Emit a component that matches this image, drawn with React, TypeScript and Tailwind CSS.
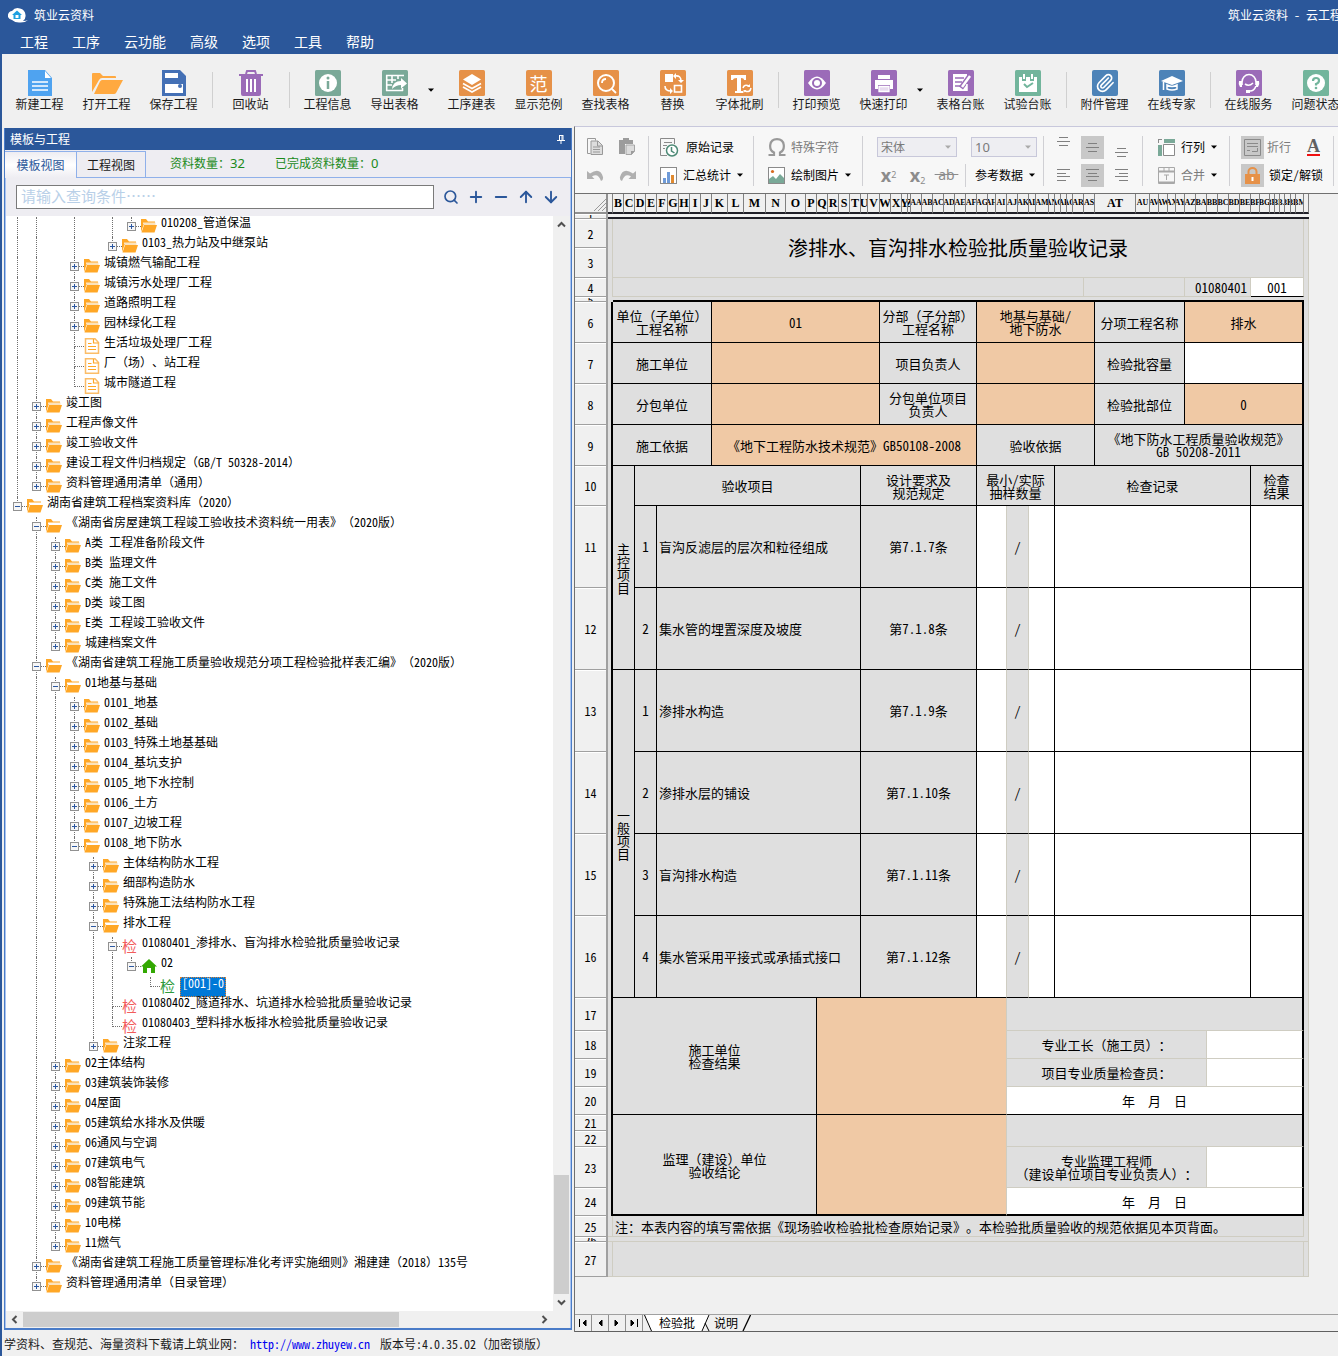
import type { ReactNode } from "react"
import { ArrowDown, ArrowUp, Minus, Paperclip, Plus, Search } from "lucide-react"

/* ---------- icons ---------- */

const Caret = ({ className = "fill-black" }: { className?: string }) => (
  <svg width="6" height="4" viewBox="0 0 6 4" className={`shrink-0 ${className}`}>
    <path d="M0 0.5h6L3 3.8z" />
  </svg>
)

const Tile = ({ color, children }: { color: string; children: ReactNode }) => (
  <svg width="26" height="26" viewBox="0 0 26 26" fill="none" stroke="#fff" strokeWidth="2">
    <rect width="26" height="26" rx="1.5" fill={color} stroke="none" />
    {children}
  </svg>
)

const GREEN = "#7aa998"
const ORANGE = "#e69148"
const PURPLE = "#9b6bb8"
const BLUE = "#4d83b8"
const MINT = "#72b59c"

const icons: Record<string, ReactNode> = {
  newFile: (
    <svg width="26" height="26" viewBox="0 0 26 26">
      <path d="M1 0h17l7 8v18H1z" fill="#4fa3f0" />
      <path d="M18 1v7h6z" fill="#fff" />
      <path d="M5 12h16M5 16h16M5 20h16" stroke="#fff" strokeWidth="1.6" />
    </svg>
  ),
  open: (
    <svg width="32" height="26" viewBox="0 0 32 26" fill="#ffa940">
      <path d="M1 22V4q0-1 1-1h7l3 3h12q1 0 1 1v1H11q-2 0-3 2z" />
      <path d="M11 10h21l-7 13q-.6 1-2 1H3l6-12.500q.700-1.500 2-1.500z" />
    </svg>
  ),
  save: (
    <svg width="26" height="26" viewBox="0 0 26 26">
      <path d="M1 0h18l6 6v20H1z" fill="#4470b5" />
      <path d="M4 3h13v5H4zM4 14h18v9H4z" fill="#fff" />
      <circle cx="19" cy="16" r="2" fill="#4470b5" />
    </svg>
  ),
  bin: (
    <svg width="26" height="26" viewBox="0 0 26 26">
      <path d="M8 4l1-3h8l1 3" fill="none" stroke={PURPLE} strokeWidth="2" />
      <path d="M1 4h24v2H23v18q0 2-2 2H5q-2 0-2-2V6H1z" fill={PURPLE} />
      <path d="M9 9v13M13 9v13M17 9v13" stroke="#fff" strokeWidth="2" />
    </svg>
  ),
  info: (
    <Tile color={GREEN}>
      <circle cx="13" cy="13" r="9" fill="#fff" stroke="none" />
      <path d="M13 11v8" stroke={GREEN} strokeWidth="2.500" />
      <circle cx="13" cy="8" r="1.500" fill={GREEN} stroke="none" />
    </Tile>
  ),
  exportTable: (
    <Tile color={GREEN}>
      <path d="M4 5.500h18M4.700 5v16M4 10h10M4 15h6M4 20.500h17M10 5v8M16 5v4M20.500 18v3" strokeWidth="1.600" />
      <path d="M10 19q1-8 9-8V8l6 5.500-6 5V15q-5 0-9 4z" fill="#fff" stroke="none" />
    </Tile>
  ),
  layers: (
    <Tile color={ORANGE}>
      <path d="M13 4l9 5.500-9 5.500-9-5.500z" fill="#fff" stroke="none" />
      <path d="M4 13.500l9 5 9-5M4 17l9 5 9-5" strokeWidth="1.700" />
    </Tile>
  ),
  find: (
    <Tile color={ORANGE}>
      <circle cx="13" cy="13" r="8" />
      <path d="M19 19l4 4M9 13q0-4 4-4" strokeWidth="1.800" />
    </Tile>
  ),
  replace: (
    <Tile color={ORANGE}>
      <path d="M5 4h8v8H5z" fill="#fff" stroke="none" />
      <path d="M14.500 15.500h7v6.500h-7zM15 6q6-1 6 5M5 16q0 5 6 5" strokeWidth="1.600" />
      <path d="M18 10h6l-3 3zM10 18v6l3-3zM16 3v6l-3-3z" fill="#fff" stroke="none" />
    </Tile>
  ),
  fontBrush: (
    <Tile color={ORANGE}>
      <path d="M4 5h15v5h-2q0-2-3-2v13h2v2H8v-2h2V8q-4 0-4 2H4z" fill="#fff" stroke="none" />
      <path d="M16 18q1-4 6-2M24 18q-1 5-6 3" strokeWidth="1.500" />
      <path d="M23 14v3h-3zM16.500 23v-3h3z" fill="#fff" stroke="none" />
    </Tile>
  ),
  eye: (
    <Tile color={PURPLE}>
      <path d="M4 13q9-13 18 0q-9 13-18 0z" fill="#fff" stroke="none" />
      <circle cx="13" cy="13" r="4" fill="#fff" stroke={PURPLE} strokeWidth="2" />
    </Tile>
  ),
  print: (
    <Tile color={PURPLE}>
      <path d="M7 5h12v4H7zM4 10h18v9h-3v-4H7v4H4z" fill="#fff" stroke="none" />
      <path d="M8 16.500h10v5H8z" fill="#e8dcf0" strokeWidth="1.300" />
    </Tile>
  ),
  ledger: (
    <Tile color={PURPLE}>
      <path d="M5 4h14v17H5z" fill="#fff" stroke="none" />
      <path d="M7 8h9M7 12h7M7 16h5" stroke={PURPLE} strokeWidth="1.500" />
      <path d="M13 18l8-11" stroke={PURPLE} strokeWidth="5" />
      <path d="M14 17l8-11" strokeWidth="2.500" />
      <path d="M19 14v7" strokeWidth="1.500" />
    </Tile>
  ),
  calendar: (
    <Tile color={MINT}>
      <path d="M4 7h18v15H4z" fill="#fff" stroke="none" />
      <path d="M9 4v7M17 4v7" stroke={MINT} strokeWidth="4" />
      <path d="M9 4v5M17 4v5" strokeWidth="2" />
      <path d="M9 14l3 3 6-4" stroke={MINT} strokeWidth="2" />
    </Tile>
  ),
  clip: (
    <span className="flex size-[26px] items-center justify-center rounded-xs bg-[#4d83b8]">
      <Paperclip size={20} color="#fff" strokeWidth={2} />
    </span>
  ),
  expert: (
    <Tile color={BLUE}>
      <path d="M2 11l11-5 11 5-11 4z" fill="#fff" stroke="none" />
      <path d="M8 15q5 3 10 0v4q-5 2-10 0zM4.500 12v8" strokeWidth="1.500" />
    </Tile>
  ),
  service: (
    <Tile color={PURPLE}>
      <path d="M6 15V12a7 7.500 0 0 1 14 0v3M9 14q4 3 8-1M20 16q-2 5-6 5" strokeWidth="1.600" />
      <path d="M3 11h3v6H4q-2-3-1-6zM20 11h3q1 3-1 6h-2zM10 20h4v3h-4z" fill="#fff" stroke="none" />
    </Tile>
  ),
  question: (
    <Tile color={MINT}>
      <circle cx="13" cy="13" r="9" fill="#fff" stroke="none" />
      <path d="M10 11q0-3 3-3t3 2.500-3 3.500v1.500" stroke={MINT} strokeWidth="2.200" />
      <circle cx="13" cy="18" r="1.300" fill={MINT} stroke="none" />
    </Tile>
  ),
  sample: (
    <span className="flex size-[26px] items-center justify-center rounded-xs bg-[#e69148] text-lg leading-none text-white">范</span>
  ),
}

const Folder = ({ open }: { open: boolean }) => (
  <svg width="16" height="14" viewBox="0 0 16 14">
    <path d="M0 13V0h5l2 2.500h7V6H2.500z" fill="#ffa726" />
    <path d="M2 5V3.500h12.500V6H3z" fill={open ? "#fff" : "#fbe3bd"} />
    <path d="M3 6h13l-2.500 7.500H.5z" fill="#ffa726" />
  </svg>
)

const Doc = () => (
  <svg width="16" height="16" viewBox="0 0 16 16" fill="none" stroke="#ffa726">
    <path d="M1.500 .8h9.500l3.500 3.700v10.700h-13z" strokeWidth="1.500" stroke="#fbbd68" />
    <path d="M9.500 1v4h5M4 5.500h3.500M4 8.500h8M4 11.500h8" strokeWidth="1.200" />
  </svg>
)

const Home = () => (
  <svg width="16" height="14" viewBox="0 0 16 14" fill="#33a802">
    <path d="M8 0l8 7.500h-2V14H10V9H6v5H2V7.500H0z" />
  </svg>
)

// the half-width feature narrows brackets too; give them their full width back
const wide = (s: string) =>
  s.split(/([（）])/).map((part, i) =>
    i % 2 ? (
      <span key={i} className="[font-feature-settings:normal]">{part}</span>
    ) : (
      part
    )
  )

/* ---------- top toolbar ---------- */

type Tool = { icon: string; label: string; caret?: boolean }

const toolGroups: Tool[][] = [
  [
    { icon: "newFile", label: "新建工程" },
    { icon: "open", label: "打开工程" },
    { icon: "save", label: "保存工程" },
  ],
  [{ icon: "bin", label: "回收站" }],
  [
    { icon: "info", label: "工程信息" },
    { icon: "exportTable", label: "导出表格", caret: true },
    { icon: "layers", label: "工序建表" },
    { icon: "sample", label: "显示范例" },
    { icon: "find", label: "查找表格" },
    { icon: "replace", label: "替换" },
    { icon: "fontBrush", label: "字体批刷" },
  ],
  [
    { icon: "eye", label: "打印预览" },
    { icon: "print", label: "快速打印", caret: true },
    { icon: "ledger", label: "表格台账" },
    { icon: "calendar", label: "试验台账" },
  ],
  [
    { icon: "clip", label: "附件管理" },
    { icon: "expert", label: "在线专家" },
  ],
  [
    { icon: "service", label: "在线服务" },
    { icon: "question", label: "问题状态" },
  ],
]

function MainToolbar() {
  return (
    <div className="flex h-[72px] overflow-hidden bg-[#f0f0f0] pt-4 pl-1">
      {toolGroups.map((group, g) => (
        <div key={g} className="flex shrink-0">
          {g > 0 && <span className="mt-0.5 mr-1 ml-[5px] h-9 w-px bg-[#d0d0d0]" />}
          {group.map((t) => (
            <div key={t.label} className="flex">
              <button className="flex w-[67px] flex-col items-center">
                <span className="flex h-[26px] items-center">{icons[t.icon]}</span>
                <span className="text-xs leading-4 whitespace-nowrap text-[#1a1a1a]">{t.label}</span>
              </button>
              {t.caret && (
                <button className="flex h-10 w-2.5 items-center" aria-label={`${t.label}选项`}>
                  <Caret />
                </button>
              )}
            </div>
          ))}
        </div>
      ))}
    </div>
  )
}

/* ---------- tree ---------- */

type Kind = "open" | "closed" | "doc" | "red" | "green" | "home"
type Node = [level: number, kind: Kind, text: string]

const tree: Node[] = [
  [6, "closed", "010208_管道保温"],
  [5, "closed", "0103_热力站及中继泵站"],
  [3, "closed", "城镇燃气输配工程"],
  [3, "closed", "城镇污水处理厂工程"],
  [3, "closed", "道路照明工程"],
  [3, "closed", "园林绿化工程"],
  [3, "doc", "生活垃圾处理厂工程"],
  [3, "doc", "厂（场）、站工程"],
  [3, "doc", "城市隧道工程"],
  [1, "closed", "竣工图"],
  [1, "closed", "工程声像文件"],
  [1, "closed", "竣工验收文件"],
  [1, "closed", "建设工程文件归档规定（GB/T 50328-2014）"],
  [1, "closed", "资料管理通用清单（通用）"],
  [0, "open", "湖南省建筑工程档案资料库（2020）"],
  [1, "open", "《湖南省房屋建筑工程竣工验收技术资料统一用表》（2020版）"],
  [2, "closed", "A类 工程准备阶段文件"],
  [2, "closed", "B类 监理文件"],
  [2, "closed", "C类 施工文件"],
  [2, "closed", "D类 竣工图"],
  [2, "closed", "E类 工程竣工验收文件"],
  [2, "closed", "城建档案文件"],
  [1, "open", "《湖南省建筑工程施工质量验收规范分项工程检验批样表汇编》（2020版）"],
  [2, "open", "01地基与基础"],
  [3, "closed", "0101_地基"],
  [3, "closed", "0102_基础"],
  [3, "closed", "0103_特殊土地基基础"],
  [3, "closed", "0104_基坑支护"],
  [3, "closed", "0105_地下水控制"],
  [3, "closed", "0106_土方"],
  [3, "closed", "0107_边坡工程"],
  [3, "open", "0108_地下防水"],
  [4, "closed", "主体结构防水工程"],
  [4, "closed", "细部构造防水"],
  [4, "closed", "特殊施工法结构防水工程"],
  [4, "open", "排水工程"],
  [5, "red", "01080401_渗排水、盲沟排水检验批质量验收记录"],
  [6, "home", "02"],
  [7, "green", "[001]-0"],
  [5, "red", "01080402_隧道排水、坑道排水检验批质量验收记录"],
  [5, "red", "01080403_塑料排水板排水检验批质量验收记录"],
  [4, "closed", "注浆工程"],
  [2, "closed", "02主体结构"],
  [2, "closed", "03建筑装饰装修"],
  [2, "closed", "04屋面"],
  [2, "closed", "05建筑给水排水及供暖"],
  [2, "closed", "06通风与空调"],
  [2, "closed", "07建筑电气"],
  [2, "closed", "08智能建筑"],
  [2, "closed", "09建筑节能"],
  [2, "closed", "10电梯"],
  [2, "closed", "11燃气"],
  [1, "closed", "《湖南省建筑工程施工质量管理标准化考评实施细则》湘建建（2018）135号"],
  [1, "closed", "资料管理通用清单（目录管理）"],
]

// does the guide line of this level go on below row i?
function continues(i: number, level: number) {
  for (let j = i + 1; j < tree.length; j++) {
    if (tree[j][0] < level) return false
    if (tree[j][0] === level) return true
  }
  return false
}

const guide = "h-[10px] border-l border-dotted border-[#707070]"

function TreeRow({ index }: { index: number }) {
  const [level, kind, text] = tree[index]
  const expanded = kind === "open" || kind === "home" || (kind === "red" && tree[index + 1][0] > level)
  const hasBox = expanded || kind === "closed"
  const selected = kind === "green"

  return (
    <li className="flex h-5 pl-0.5 whitespace-nowrap">
      {Array.from({ length: level }, (_, l) => (
        <span key={l} className="w-[19px] shrink-0 pl-[9px]">
          {continues(index, l) && <span className="block h-5 border-l border-dotted border-[#707070]" />}
        </span>
      ))}
      <span className="relative w-[19px] shrink-0 pl-[9px]">
        <span className={`block ${guide}`} />
        {continues(index, level) && <span className={`block ${guide}`} />}
        <span className="absolute top-[9px] right-0 left-[9px] border-t border-dotted border-[#707070]" />
        {hasBox && (
          <svg width="9" height="9" viewBox="0 0 9 9" className="absolute top-[5px] left-[5px]">
            <rect x=".5" y=".5" width="8" height="8" fill="#f6f6f6" stroke="#919191" />
            <path d={expanded ? "M2 4.500h5" : "M2 4.500h5M4.500 2v5"} stroke="#2b57a0" />
          </svg>
        )}
      </span>
      <span className="flex h-[18px] w-5 shrink-0 items-center">
        {(kind === "open" || kind === "closed") && <Folder open={kind === "open"} />}
        {kind === "doc" && <Doc />}
        {kind === "home" && <Home />}
        {kind === "red" && <span className="text-[15px] leading-4 text-[#f25c5c]">检</span>}
        {kind === "green" && <span className="text-[15px] leading-4 text-[#2e9a3c]">检</span>}
      </span>
      {selected ? (
        <span className="h-5 border border-dotted border-[#e08030] bg-[#0078d7] px-px leading-[10px] text-white">{text}</span>
      ) : (
        <span className="leading-[10px]">{wide(text)}</span>
      )}
    </li>
  )
}

const Chevron = ({ d }: { d: string }) => (
  <svg width="9" height="9" viewBox="0 0 9 9" fill="none" stroke="#505050" strokeWidth="2">
    <path d={d} />
  </svg>
)

function TemplatePanel() {
  return (
    <section className="my-0.5 ml-0.5 flex w-[568px] shrink-0 flex-col border border-t-0 border-b-2 border-[#4a7cc8] bg-[#eeedf2]">
      <header className="flex h-[22px] items-center justify-between bg-[#2b579a] pr-1.5 pl-[5px] text-xs text-white">
        <h2>模板与工程</h2>
        <svg width="8" height="9" viewBox="0 0 8 9" fill="none" stroke="#fff">
          <path d="M2 .5h4M2.500 0v5M5 0v5M6 0v5M0 5.500h8M4 6v3" />
        </svg>
      </header>

      <div className="flex h-7 border-b border-[#8fb0ea] pt-px text-xs text-[#1a8a1a]">
        <button className="-mb-px w-[71px] border-t border-[#8fb0ea] bg-gradient-to-b from-[#eeedf2] via-white to-[#eeedf2] text-[#2b579a]">
          模板视图
        </button>
        <button className="w-[70px] border border-b-0 border-[#8fb0ea] text-[#1a1a1a]">工程视图</button>
        <p className="ml-6 self-center">
          资料数量：<span className="font-['Noto_Sans'] text-[13px]">32</span>
        </p>
        <p className="ml-[30px] self-center">
          已完成资料数量：<span className="font-['Noto_Sans'] text-[13px]">0</span>
        </p>
      </div>

      <div className="flex flex-1 flex-col border-x border-[#a9c4f0]">
        <div className="flex h-[38px] items-center gap-[9px] pr-[11px] pl-2.5 text-[#2b579a]">
          <input
            aria-label="查询条件"
            placeholder="请输入查询条件……"
            className="h-6 min-w-0 flex-1 border border-[#7a7a7a] bg-white px-1 pb-1 text-[15px] placeholder:text-[#b9d0e8]"
          />
          <button aria-label="查询"><Search size={16} strokeWidth={2.5} /></button>
          <button aria-label="展开"><Plus size={18} strokeWidth={2.5} className="-mx-px" /></button>
          <button aria-label="收起"><Minus size={18} strokeWidth={2.5} className="-mx-px" /></button>
          <button aria-label="上一个"><ArrowUp size={18} strokeWidth={2.5} className="-mx-px" /></button>
          <button aria-label="下一个"><ArrowDown size={18} strokeWidth={2.5} className="-mx-px" /></button>
        </div>

        <div className="flex flex-1">
          <ul className="flex-1 overflow-hidden bg-white pt-px text-xs">
            {tree.map((_, i) => (
              <TreeRow key={i} index={i} />
            ))}
          </ul>
          <div className="flex w-[17px] flex-col items-center bg-[#f0f0f0]">
            <button aria-label="向上滚动" className="flex h-[17px] items-center"><Chevron d="M1 6.500L4.500 3 8 6.500" /></button>
            <div className="flex w-[15px] flex-1 flex-col justify-end">
              <div className="h-[119px] bg-[#cdcdcd]" />
            </div>
            <button aria-label="向下滚动" className="flex h-[17px] items-center"><Chevron d="M1 2.500L4.500 6 8 2.500" /></button>
          </div>
        </div>
        <div className="flex h-[17px] items-center bg-[#f0f0f0] pr-[17px]">
          <button aria-label="向左滚动" className="flex w-[17px] justify-center"><Chevron d="M6.500 1L3 4.500 6.500 8" /></button>
          <div className="h-[15px] flex-1">
            <div className="h-full w-[376px] bg-[#cdcdcd]" />
          </div>
          <button aria-label="向右滚动" className="flex w-[17px] justify-center"><Chevron d="M2.500 1L6 4.500 2.500 8" /></button>
        </div>
      </div>
    </section>
  )
}

/* ---------- format bar ---------- */

const Sep = () => <span className="mt-[3px] h-[50px] w-px shrink-0 bg-[#d0d0d4]" />

type Align = "top" | "middle" | "bottom" | "left" | "center" | "right"

const alignPaths: Record<Align, string> = {
  top: "M2 1.500h9M0 5.500h13M2 9.500h9",
  middle: "M2 7.500h9M0 11.500h13M2 15.500h9",
  bottom: "M2 12.500h9M0 16.500h13M2 20.500h9",
  left: "M0 5.500h13M0 9.500h9M0 12.500h13M0 16.500h9",
  center: "M0 5.500h13M2 9.500h9M0 12.500h13M2 16.500h9",
  right: "M0 5.500h13M4 9.500h9M0 12.500h13M4 16.500h9",
}

const AlignButton = ({ kind, on }: { kind: Align; on?: boolean }) => (
  <button aria-label={kind} className="flex w-[29px] items-center justify-center">
    <span className={on ? "flex h-[23px] w-[23px] items-center justify-center bg-[#c8c8c8]" : "flex"}>
      <svg width="13" height="22" viewBox="0 0 13 22" stroke="#808080">
        <path d={alignPaths[kind]} />
      </svg>
    </span>
  </button>
)

const half = "flex h-7 items-center"

function FormatBar() {
  return (
    <div className="flex h-[66px] shrink-0 overflow-hidden bg-[#f7f7f7] pt-1.5 text-xs whitespace-nowrap">
      <div className="w-[73px] shrink-0 pl-1">
        <div className={half}>
          <button aria-label="复制" className="flex w-8 justify-center">
            <svg width="16" height="18" viewBox="0 0 16 18" fill="none" stroke="#999">
              <path d="M3.500 15.500h-3V.5h8v2" />
              <path d="M4 3h7l4.500 4.500v9H4z" fill="#ddd" />
              <path d="M10.500 3v5h5M6 9h7M6 11.500h7M6 14h7" />
            </svg>
          </button>
          <button aria-label="粘贴" className="flex w-8 justify-center">
            <svg width="16" height="18" viewBox="0 0 16 18" fill="#9c9c9c">
              <path d="M0 2h4V0h6v2h4v4H6v10H0z" />
              <path d="M7 7h8.500v6l-3 3.500H7z" fill="#dcdcdc" stroke="#a5a5a5" />
              <path d="M12 17v-4h4z" />
            </svg>
          </button>
        </div>
        <div className={half}>
          <button aria-label="撤销" className="flex w-8 justify-center">
            <svg width="17" height="12" viewBox="0 0 17 12" fill="#b0b0b0">
              <path d="M0 2v8h7.500L5 7.500q6-4 9 4.500 2.500-1 2-4Q13-2.500 3 4.500z" />
            </svg>
          </button>
          <button aria-label="重做" className="flex w-8 justify-center">
            <svg width="17" height="12" viewBox="0 0 17 12" fill="#b0b0b0">
              <path d="M17 2v8H9.500L12 7.500Q6 3.500 3 12 .5 11 1 8 4-2.500 14 4.500z" />
            </svg>
          </button>
        </div>
      </div>
      <Sep />
      <div className="w-[104px] shrink-0 pl-[11px]">
        <button className={half}>
          <svg width="19" height="19" viewBox="0 0 19 19" fill="none">
            <path d="M7 17.500H.5V.5h14V6M4 4.500h8M3 7.500h4M3 10.500h2" stroke="#8a8a8a" />
            <circle cx="12" cy="12.500" r="5.500" fill="#fff" stroke="#4d8a76" strokeWidth="1.500" />
            <path d="M11.500 9v4l3 2" stroke="#4d8a76" strokeWidth="1.500" />
          </svg>
          <span className="ml-[7px]">原始记录</span>
        </button>
        <button className={half}>
          <svg width="17" height="17" viewBox="0 0 17 17">
            <rect x=".5" y=".5" width="16" height="16" fill="#fff" stroke="#8a8a8a" />
            <path d="M3 11h3v5H3zM7 5h3v11H7z" fill="#6f9bd8" />
            <path d="M11 8h3v8h-3z" fill="#e08a30" />
          </svg>
          <span className="mx-1.5">汇总统计</span>
          <Caret />
        </button>
      </div>
      <Sep />
      <div className="w-[108px] shrink-0 pl-3.5">
        <button className={`${half} text-[#7a7a7a]`}>
          <svg width="18" height="18" viewBox="0 0 18 18" fill="none" stroke="#999" strokeWidth="2.200">
            <path d="M.5 17H6v-2.500C.5 12 .5 1.200 9 1.200S17.500 12 12 14.500V17h5.500" />
          </svg>
          <span className="ml-[5px]">特殊字符</span>
        </button>
        <button className={half}>
          <svg width="17" height="17" viewBox="0 0 17 17">
            <rect x=".5" y=".5" width="16" height="16" fill="#fff" stroke="#8a8a8a" />
            <path d="M1 12l4-3 3 3 4-5 4 4v5H1z" fill="#7aa998" />
            <circle cx="4.500" cy="4.500" r="1.600" fill="#d86a20" />
          </svg>
          <span className="mx-1.5">绘制图片</span>
          <Caret />
        </button>
      </div>
      <Sep />
      <div className="w-[180px] shrink-0 text-[#7a7a7a]">
        <div className={`${half} gap-3.5 pl-3.5`}>
          <span className="relative flex items-center">
            <select aria-label="字体" disabled className="h-5 w-20 appearance-none border border-[#c8c8da] bg-[#eeeef2] px-[3px] leading-none">
              <option>宋体</option>
            </select>
            <span className="absolute right-1.5"><Caret className="fill-[#aaa]" /></span>
          </span>
          <span className="relative flex items-center">
            <select aria-label="字号" disabled className="h-5 w-[66px] appearance-none border border-[#c8c8da] bg-[#eeeef2] px-[3px] font-['Noto_Sans'] text-[13px] leading-none">
              <option>10</option>
            </select>
            <span className="absolute right-1.5"><Caret className="fill-[#aaa]" /></span>
          </span>
        </div>
        <div className="flex h-7 items-center pl-[11px] font-['Noto_Sans']">
          <button className="w-[29px] text-lg leading-5 font-bold text-[#8c8c8c]">x<sup className="text-[9px] font-normal">2</sup></button>
          <button className="w-[29px] text-lg leading-5 font-bold text-[#8c8c8c]">x<sub className="text-[9px] font-normal">2</sub></button>
          <button className="mr-1 w-[29px] text-sm text-[#8c8c8c] line-through">&nbsp;ab&nbsp;</button>
          <span className="h-[23px] w-px bg-[#d0d0d4]" />
          <button className="ml-[9px] flex items-center font-['Noto_Sans_CJK_SC'] text-black">
            <span className="mr-1.5">参考数据</span>
            <Caret />
          </button>
        </div>
      </div>
      <Sep />
      <div className="w-[98px] shrink-0 pl-[5px]">
        <div className={half}>
          <AlignButton kind="top" />
          <AlignButton kind="middle" on />
          <AlignButton kind="bottom" />
        </div>
        <div className={half}>
          <AlignButton kind="left" />
          <AlignButton kind="center" on />
          <AlignButton kind="right" />
        </div>
      </div>
      <Sep />
      <div className="w-[86px] shrink-0 pl-[15px]">
        <button className={half}>
          <svg width="17" height="17" viewBox="0 0 17 17">
            <path d="M6 0h11v4H6zM0 6h4v11H0z" fill="#7aa998" />
            <path d="M0 .5h4M.5 0v4" stroke="#8a8a8a" />
            <path d="M5.500 5.500h11v11h-11z" fill="#fff" stroke="#8a8a8a" />
          </svg>
          <span className="mx-1.5">行列</span>
          <Caret />
        </button>
        <button className={`${half} text-[#7a7a7a]`}>
          <svg width="17" height="17" viewBox="0 0 17 17" fill="none" stroke="#a8a8a8">
            <path d="M.5 .5h16v16H.5zM6 0v4M11 0v4M6 8h5M8.500 8v5" />
            <path d="M1 4.500h15M1 15.500h15" strokeWidth="2" />
          </svg>
          <span className="mx-1.5">合并</span>
          <Caret />
        </button>
      </div>
      <Sep />
      <div className="w-[103px] shrink-0 pl-[11px]">
        <div className={half}>
          <button className="flex items-center text-[#7a7a7a]">
            <span className="mr-[3px] flex h-[23px] w-[23px] items-center justify-center bg-[#c8c8c8]">
              <svg width="17" height="17" viewBox="0 0 17 17" fill="none" stroke="#8a8a8a">
                <path d="M.5 .5h16v16H.5zM3 4.500h11M3 7.500h11M3 11.500h3M8 12.500h5.500V9" />
              </svg>
            </span>
            折行
          </button>
          <button className="ml-4 border-b-2 border-[#f01010] font-['Liberation_Serif'] text-lg leading-4 font-bold text-[#606060]">A</button>
        </div>
        <button className={half}>
          <span className="mr-[5px] flex h-[23px] w-[23px] items-center justify-center bg-[#c8c8c8]">
            <svg width="15" height="17" viewBox="0 0 15 17">
              <path d="M3.500 8V4.500a4 3.500 0 0 1 8 0V8" fill="none" stroke="#e69148" strokeWidth="2" />
              <path d="M0 7h15v10H0z" fill="#e69148" />
              <path d="M7.500 10v4" stroke="#fff" strokeWidth="2" />
            </svg>
          </span>
          锁定/解锁
        </button>
      </div>
      <Sep />
    </div>
  )
}

/* ---------- sheet ---------- */

const letters: [string, number][] = [
  ["", 5], ["B", 11], ["C", 11], ["D", 11], ["E", 11], ["F", 11], ["G", 11], ["H", 11], ["I", 11], ["J", 11],
  ["K", 16], ["L", 16], ["M", 22], ["N", 20], ["O", 20], ["P", 11], ["Q", 11], ["R", 11], ["S", 11], ["T", 11],
  ["U", 7], ["V", 12], ["W", 11], ["X", 11], ["Y", 6], ["Z", 3], ["AA", 11], ["AB", 11], ["AC", 11], ["AD", 11],
  ["AE", 11], ["AF", 11], ["AG", 11], ["AH", 8], ["AI", 11], ["AJ", 11], ["AK", 11], ["AL", 7], ["AM", 13], ["AN", 6],
  ["AO", 6], ["AP", 6], ["AQ", 6], ["AR", 11], ["AS", 11], ["AT", 41], ["AU", 14], ["AV", 9], ["AW", 9], ["AX", 8],
  ["AY", 9], ["AZ", 11], ["BA", 11], ["BB", 11], ["BC", 11], ["BD", 11], ["BE", 11], ["BF", 9], ["BG", 10], ["BH", 5],
  ["BI", 5], ["BJ", 5], ["BK", 6], ["BL", 5], ["BM", 8], ["", 5],
]

const colWidths = [33, 5, 22, 22, 55, 105, 44, 19, 97, 30, 22, 26, 29, 11, 90, 22, 44, 53, 5]
const rowHeights = [5, 29, 30, 19, 5, 41, 41, 41, 41, 40, 82, 82, 82, 82, 82, 82, 33, 28, 28, 28, 16, 16, 41, 28, 21, 5, 35]

const faintR = "border-r border-r-[#cfcdc2]"
const faintB = "border-b border-b-[#cfcdc2]"
const lineR = "border-r border-r-black"
const lineB = "border-b border-b-black"
const edgeR = "border-r-2 border-r-black"
const edgeB = "border-b-2 border-b-black"
const box = `${lineR} ${lineB}`
const last = `${edgeR} ${lineB}`
const peach = "bg-[#f0c9a5]"

function Row({ n, tail = true, children }: { n: number; tail?: boolean; children?: ReactNode }) {
  const h = rowHeights[n - 1]
  return (
    <tr style={{ height: h }}>
      <th className="border-r-2 border-b border-[#a0a0a0] bg-[#f0f0f0] p-0 text-xs font-normal">
        <div className="flex items-center justify-center overflow-hidden border-t border-white" style={{ height: h - 1 }}>
          {n}
        </div>
      </th>
      {children}
      {tail && <td className={faintR} />}
    </tr>
  )
}

const items: [row: number, no: number, name: string, clause: string][] = [
  [11, 1, "盲沟反滤层的层次和粒径组成", "第7.1.7条"],
  [12, 2, "集水管的埋置深度及坡度", "第7.1.8条"],
  [13, 1, "渗排水构造", "第7.1.9条"],
  [14, 2, "渗排水层的铺设", "第7.1.10条"],
  [15, 3, "盲沟排水构造", "第7.1.11条"],
  [16, 4, "集水管采用平接式或承插式接口", "第7.1.12条"],
]

function Sheet() {
  return (
    <div className="flex-1 overflow-hidden border-t border-[#707070] bg-[#f0f0f0]">
      <div className="flex h-5">
        <div className="flex w-[33px] shrink-0 items-end justify-end border-r-2 border-b-2 border-[#909090] pb-px">
          <svg width="12" height="12" viewBox="0 0 12 12" stroke="#999">
            <path d="M0 12L12 0M4 12l8-8M8 12l4-4" />
          </svg>
        </div>
        {letters.map(([name, w], i) => (
          <div
            key={i}
            style={{ width: w }}
            className={`flex shrink-0 items-center justify-center overflow-hidden border-r border-b-2 border-r-[#808080] border-b-[#202028] font-['Liberation_Serif'] font-bold ${
              name.length > 1 && w < 20 ? "text-[8px]" : "text-xs"
            }`}
          >
            {name}
          </div>
        ))}
      </div>

      <table className="w-[734px] table-fixed border-separate border-spacing-0 bg-[#dfdfdf] text-center text-[13px] leading-[13px] [&_td]:p-0">
        <colgroup>
          {colWidths.map((w, i) => (
            <col key={i} style={{ width: w }} />
          ))}
        </colgroup>
        <tbody>
          <Row n={1} tail={false}>
            <td colSpan={18} className="border-b-2 border-b-[#202028] bg-[#f0f0f0]" />
          </Row>
          <Row n={2}>
            <td rowSpan={2} className={faintR} />
            <td colSpan={16} rowSpan={2} className={`${faintR} ${faintB} text-xl`}>
              渗排水、盲沟排水检验批质量验收记录
            </td>
          </Row>
          <Row n={3} />
          <Row n={4}>
            <td className={faintR} />
            <td colSpan={11} className={`${faintR} ${faintB}`} />
            <td colSpan={2} className={`${faintR} ${faintB}`} />
            <td colSpan={2} className={`${faintR} ${faintB} text-right`}><span className="mr-[3px]">01080401</span></td>
            <td className={`${faintR} ${lineB} bg-white`}>001</td>
          </Row>
          <Row n={5}>
            <td />
            <td colSpan={16} className={edgeB} />
          </Row>
          <Row n={6}>
            <td rowSpan={19} className={edgeR} />
            <td colSpan={3} className={box}>{wide("单位（子单位）")}<br />工程名称</td>
            <td colSpan={3} className={`${box} ${peach}`}>01</td>
            <td className={box}>{wide("分部（子分部）")}<br />工程名称</td>
            <td colSpan={5} className={`${box} ${peach}`}>地基与基础/<br />地下防水</td>
            <td className={box}>分项工程名称</td>
            <td colSpan={3} className={`${last} ${peach}`}>排水</td>
          </Row>
          <Row n={7}>
            <td colSpan={3} className={box}>施工单位</td>
            <td colSpan={3} className={`${box} ${peach}`} />
            <td className={box}>项目负责人</td>
            <td colSpan={5} className={`${box} ${peach}`} />
            <td className={box}>检验批容量</td>
            <td colSpan={3} className={`${last} bg-white`} />
          </Row>
          <Row n={8}>
            <td colSpan={3} className={box}>分包单位</td>
            <td colSpan={3} className={`${box} ${peach}`} />
            <td className={box}>分包单位项目<br />负责人</td>
            <td colSpan={5} className={`${box} ${peach}`} />
            <td className={box}>检验批部位</td>
            <td colSpan={3} className={`${last} ${peach}`}>0</td>
          </Row>
          <Row n={9}>
            <td colSpan={3} className={box}>施工依据</td>
            <td colSpan={4} className={`${box} ${peach}`}>《地下工程防水技术规范》GB50108-2008</td>
            <td colSpan={5} className={box}>验收依据</td>
            <td colSpan={4} className={last}>《地下防水工程质量验收规范》<br />GB 50208-2011</td>
          </Row>
          <Row n={10}>
            <td rowSpan={3} className={box}>主<br />控<br />项<br />目</td>
            <td colSpan={4} className={box}>验收项目</td>
            <td colSpan={2} className={box}>设计要求及<br />规范规定</td>
            <td colSpan={3} className={box}>最小/实际<br />抽样数量</td>
            <td colSpan={5} className={box}>检查记录</td>
            <td className={last}>检查<br />结果</td>
          </Row>
          {items.map(([row, no, name, clause]) => (
            <Row key={row} n={row}>
              {row === 13 && (
                <td rowSpan={4} className={box}>一<br />般<br />项<br />目</td>
              )}
              <td className={box}>{no}</td>
              <td colSpan={3} className={`${box} text-left`}><span className="ml-0.5">{name}</span></td>
              <td colSpan={2} className={box}>{clause}</td>
              <td className={`${faintR} ${lineB} bg-white`} />
              <td className={`${faintR} ${lineB}`}>/</td>
              <td className={`${box} bg-white`} />
              <td colSpan={5} className={`${box} bg-white`} />
              <td className={`${last} bg-white`} />
            </Row>
          ))}
          <Row n={17}>
            <td colSpan={4} rowSpan={4} className={box}>施工单位<br />检查结果</td>
            <td colSpan={4} rowSpan={4} className={`${faintR} ${lineB} ${peach}`} />
            <td colSpan={8} className={`${edgeR} ${faintB}`} />
          </Row>
          <Row n={18}>
            <td colSpan={6} className={`${faintR} ${faintB}`}>{wide("专业工长（施工员）：")}</td>
            <td colSpan={2} className={`${edgeR} ${faintB} bg-white`} />
          </Row>
          <Row n={19}>
            <td colSpan={6} className={`${faintR} ${faintB}`}>项目专业质量检查员：</td>
            <td colSpan={2} className={`${edgeR} ${faintB} bg-white`} />
          </Row>
          <Row n={20}>
            <td colSpan={8} className={`${last} bg-white whitespace-pre`}>年  月  日</td>
          </Row>
          <Row n={21}>
            <td colSpan={4} rowSpan={4} className={`${lineR} ${edgeB}`}>{wide("监理（建设）单位")}<br />验收结论</td>
            <td colSpan={4} rowSpan={4} className={`${faintR} ${edgeB} ${peach}`} />
            <td colSpan={8} rowSpan={2} className={`${edgeR} ${faintB}`} />
          </Row>
          <Row n={22} />
          <Row n={23}>
            <td colSpan={6} className={`${faintR} ${faintB}`}>专业监理工程师<br />{wide("（建设单位项目专业负责人）：")}</td>
            <td colSpan={2} className={`${edgeR} ${faintB} bg-white`} />
          </Row>
          <Row n={24}>
            <td colSpan={8} className={`${edgeR} ${edgeB} bg-white whitespace-pre`}>年  月  日</td>
          </Row>
          <Row n={25}>
            <td className={`${faintR} ${faintB}`} />
            <td colSpan={16} className={`${faintR} ${faintB} text-left whitespace-nowrap`}>
              <span className="ml-0.5">注：本表内容的填写需依据《现场验收检验批检查原始记录》。本检验批质量验收的规范依据见本页背面。</span>
            </td>
          </Row>
          <Row n={26} tail={false}>
            <td colSpan={18} className={`${faintR} ${faintB}`} />
          </Row>
          <Row n={27} tail={false}>
            <td className={`${faintR} ${faintB}`} />
            <td colSpan={16} className={`${faintR} ${faintB}`} />
            <td className={`${faintR} ${faintB}`} />
          </Row>
        </tbody>
      </table>
    </div>
  )
}

const navPaths: [string, string][] = [
  ["首页", "M1.500 1v8M8 2v6L5 5z"],
  ["上一页", "M7 2v6L4 5z"],
  ["下一页", "M3 2v6l3-3z"],
  ["末页", "M2 2v6l3-3zM8.500 1v8"],
]

function SheetTabs() {
  return (
    <div className="flex h-[18px] shrink-0 border-y border-t-[#a0a0a0] border-b-[#606060] bg-[#f0f0f0] text-xs leading-4">
      {navPaths.map(([label, d]) => (
        <button key={label} aria-label={label} className="flex w-[17px] items-center justify-center border-r border-[#909090]">
          <svg width="10" height="10" viewBox="0 0 10 10" stroke="#000" strokeWidth="1"><path d={d} /></svg>
        </button>
      ))}
      <button className="flex">
        <svg width="9" height="16" viewBox="0 0 9 16" className="ml-px">
          <path d="M0 0h9v16H7z" fill="#fff" />
          <path d="M.5 0l7 16" stroke="#000" />
        </svg>
        <span className="bg-white px-1.5">检验批</span>
        <svg width="9" height="16" viewBox="0 0 9 16">
          <path d="M0 0h9L2 16H0z" fill="#fff" />
          <path d="M8 0L1 16M4 8l4 8" fill="none" stroke="#000" />
        </svg>
      </button>
      <button className="flex">
        <span className="px-1">说明</span>
        <svg width="9" height="16" viewBox="0 0 9 16"><path d="M8.500 0L1 16" stroke="#000" strokeWidth="1.300" /></svg>
      </button>
    </div>
  )
}

/* ---------- window ---------- */

const menus = ["工程", "工序", "云功能", "高级", "选项", "工具", "帮助"]

export default function App() {
  return (
    <div className="flex min-h-screen flex-col overflow-hidden bg-[#f0f0f0] font-['Noto_Sans_CJK_SC',sans-serif] text-black [font-feature-settings:'hwid'] [text-spacing-trim:space-all]">
      <header className="h-[54px] bg-[#2b579a] text-white">
        <div className="flex h-[30px] items-center pl-2 text-xs">
          <svg width="20" height="15" viewBox="0 0 20 15" className="mr-1.5">
            <path d="M4 12q-5-1-4-5.500Q1 3 4 3q3-4 8-2.500 5 1 5.500 6.500.5 4-2.500 6 3 0 5-1-3 3-9 2.500Q7 14.500 4 12z" fill="#fff" />
            <path d="M9 2.500L14 7h-1.500v4h-7V7H4z" fill="#20a0e0" />
            <path d="M7.500 7h3v3h-3z" fill="#fff" />
          </svg>
          <h1>筑业云资料</h1>
          <p className="ml-auto w-[110px] overflow-hidden whitespace-nowrap">筑业云资料 - 云工程</p>
        </div>
        <nav className="flex h-[22px] items-center gap-6 pl-5 text-sm">
          {menus.map((m) => (
            <button key={m}>{m}</button>
          ))}
        </nav>
      </header>

      <div className="flex flex-1 flex-col border-l-2 border-[#2b579a]">
        <MainToolbar />
        <main className="flex flex-1">
          <TemplatePanel />
          <section className="ml-0.5 flex min-w-0 flex-1 flex-col border-t border-l border-t-[#c8c8dc] border-l-[#707070]">
            <FormatBar />
            <Sheet />
            <SheetTabs />
          </section>
        </main>
        <footer className="flex h-6 items-center pl-0.5 text-xs whitespace-nowrap text-[#1a1a1a]">
          <span>学资料、查规范、海量资料下载请上筑业网：</span>
          <a href="http://www.zhuyew.cn" className="mr-2.5 ml-1.5 text-[#0000f0]">http://www.zhuyew.cn</a>
          <span>{wide("版本号:4.0.35.02（加密锁版）")}</span>
        </footer>
      </div>
    </div>
  )
}
